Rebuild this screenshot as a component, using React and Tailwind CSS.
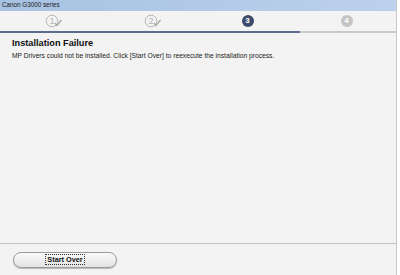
import React from "react";

const StepDone = ({ n }) => (
  <svg width="18" height="14" viewBox="0 0 18 14">
    <circle cx="7" cy="7" r="5.8" fill="none" stroke="#b8b8b8" strokeWidth="1" />
    <text x="7" y="10" textAnchor="middle" fontSize="8.5" fill="#b0b0b0" fontFamily="Liberation Sans, sans-serif">
      {n}
    </text>
    <path d="M10 9 L12 11.5 L16.5 6" fill="none" stroke="#a8a8a8" strokeWidth="1.3" />
  </svg>
);

const StepNum = ({ n, active }) => (
  <div
    className={`flex h-[12px] w-[12px] items-center justify-center rounded-full text-[8px] font-bold leading-none text-white ${
      active ? "bg-[#3c4a6c]" : "bg-[#c4c4c4]"
    }`}
  >
    {n}
  </div>
);

export default function App() {
  return (
    <div
      className="flex h-[275px] w-[400px] overflow-hidden bg-white"
      style={{ fontFamily: "'Liberation Sans', Arial, sans-serif" }}
    >
      <div className="flex w-[397px] flex-col border-r border-[#c8c8c8] bg-[#f3f3f3]">
        <div className="flex h-[11px] items-center bg-gradient-to-r from-[#a7c2e3] to-[#bcd1ec] pl-[2px] text-[6.3px] leading-none text-[#1a1a1a]">
          Canon G3000 series
        </div>
        <div className="grid h-[20px] grid-cols-4 items-center">
          <div className="flex justify-center pl-[8px]"><StepDone n="1" /></div>
          <div className="flex justify-center pl-[8px]"><StepDone n="2" /></div>
          <div className="flex justify-center"><StepNum n="3" active /></div>
          <div className="flex justify-center"><StepNum n="4" /></div>
        </div>
        <div className="flex h-[2px]">
          <div className="w-[300px] bg-[#5d6d8e]" />
          <div className="flex-1 bg-[#c9c9c9]" />
        </div>
        <div className="flex-1 px-[12px] pt-[5px]">
          <div className="text-[9.2px] font-bold leading-[11px] text-[#111]">Installation Failure</div>
          <div className="mt-[2px] text-[6.7px] leading-[9px] text-[#222]">
            MP Drivers could not be installed. Click [Start Over] to reexecute the installation process.
          </div>
        </div>
        <div className="h-[1px] bg-[#c4c4c4]" />
        <div className="flex h-[31px] items-center pl-[13px]">
          <button className="flex h-[16px] w-[104px] items-center justify-center rounded-full border border-[#9a9a9a] bg-gradient-to-b from-[#fafafa] to-[#e2e2e2] shadow-[0_1px_1px_rgba(0,0,0,0.25)]">
            <span className="border border-dotted border-[#333] px-[1px] text-[7.3px] font-bold leading-[9px] text-[#111]">
              Start Over
            </span>
          </button>
        </div>
      </div>
    </div>
  );
}
